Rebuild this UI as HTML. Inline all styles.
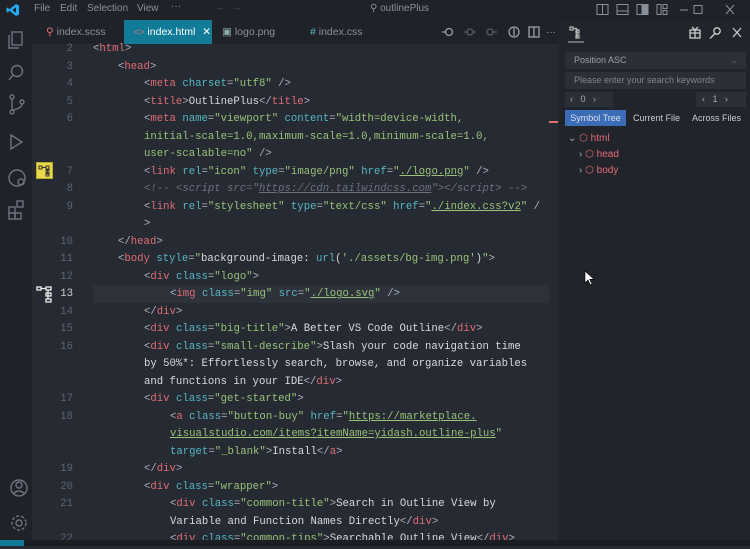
<!DOCTYPE html>
<html><head><meta charset="utf-8"><style>
*{margin:0;padding:0;box-sizing:border-box}
body{width:750px;height:546px;background:#262a32;overflow:hidden;position:relative;font-family:"Liberation Sans",sans-serif;color:#abb2bf}
.abs{position:absolute}
#title{left:0;top:0;width:750px;height:20px;background:#1f2228;font-size:10px;color:#8a909b}
#act{left:0;top:20px;width:32px;height:520px;background:#1f2228}
#tabs{left:32px;top:20px;width:526px;height:24px;background:#1f2228}
.tab{position:absolute;top:0;height:24px;line-height:24px;font-size:10.5px;color:#8a909b}
#side{left:558px;top:20px;width:192px;height:520px;background:#21252b}
#status{left:0;top:540px;width:750px;height:6px;background:#1b1e23}
.code{position:absolute;left:0;top:41px;width:558px;font-family:"Liberation Mono",monospace;font-size:10.65px;}
.ln{position:absolute;height:17.5px;line-height:17.5px;white-space:pre}
.n{right:485px;color:#5c6370;text-align:right;width:40px}
.p{color:#abb2bf}.t{color:#e06c75}.a{color:#56b6c2}.s{color:#98c379}.u{color:#98c379;text-decoration:underline}.x{color:#d7dae0}.c{color:#6b717d;font-style:italic}
.box{position:absolute;background:#2b2f37;font-size:9px;color:#8a909b}
</style></head><body>
<div id="title" class="abs">
 <svg class="abs" style="left:6px;top:3px" width="14" height="14" viewBox="0 0 14 14"><path d="M10 1 L13 2.5 V11.5 L10 13 L3.5 7.8 L1.5 9.5 L0.5 9 V5 L1.5 4.5 L3.5 6.2 Z M10 4.3 L6.2 7 L10 9.7 Z" fill="#23a9f2"/></svg>
 <span class="abs" style="left:34px;top:3px">File</span>
 <span class="abs" style="left:60px;top:3px">Edit</span>
 <span class="abs" style="left:87px;top:3px">Selection</span>
 <span class="abs" style="left:137px;top:3px">View</span>
 <span class="abs" style="left:171px;top:1px">···</span>
 <span class="abs" style="left:216px;top:2px;color:#4c515b">←&nbsp;&nbsp;→</span>
 <span class="abs" style="left:370px;top:3px">⚲ outlinePlus</span>
 <svg class="abs" style="left:576px;top:3px" width="170" height="14"><g stroke="#8a909b" fill="none"><rect x="21" y="1.5" width="11" height="10"/><line x1="26.5" y1="1.5" x2="26.5" y2="11.5"/><rect x="41" y="1.5" width="11" height="10"/><line x1="41" y1="8" x2="52" y2="8"/><rect x="61" y="1.5" width="11" height="10"/><rect x="66" y="1.5" width="6" height="10" fill="#8a909b"/><rect x="81" y="1.5" width="4" height="10"/><rect x="87" y="1.5" width="4" height="4"/><rect x="87" y="7.5" width="4" height="4"/><line x1="104" y1="7" x2="112" y2="7"/><rect x="118" y="2.5" width="8" height="8"/><path d="M150 2 L158 11 M158 2 L150 11"/></g></svg>
</div>
<div id="act" class="abs">
 <svg width="32" height="520" viewBox="0 0 32 520"><g stroke="#6d7380" fill="none" stroke-width="1.4">
 <rect x="12" y="12" width="10" height="13"/><path d="M9 15 V28 H19"/>
 <circle cx="17" cy="51" r="5.5"/><line x1="13" y1="55" x2="9" y2="60"/>
 <circle cx="12" cy="77" r="2"/><circle cx="12" cy="92" r="2"/><circle cx="22" cy="82" r="2"/><path d="M12 79 V90 M22 84 Q22 88 13 90"/>
 <path d="M11 115 L22 122 L11 129 Z"/>
 <circle cx="17" cy="158" r="8"/><circle cx="21" cy="162" r="3"/>
 <rect x="9" y="187" width="6" height="6"/><rect x="9" y="193" width="6" height="6"/><rect x="15" y="193" width="6" height="6"/><rect x="17" y="181" width="6" height="6"/>
 <circle cx="19" cy="468" r="8"/><circle cx="19" cy="465" r="3"/><path d="M13 474 Q19 468 25 474"/>
 <circle cx="19" cy="503" r="3"/><circle cx="19" cy="503" r="7" stroke-dasharray="3 2"/>
 </g></svg>
</div>
<div id="tabs" class="abs">
 <div class="tab" style="left:14px"><span style="color:#e06c75">⚲</span> index.scss</div>
 <div class="tab" style="left:92px;width:88px;background:#127c98;color:#fff;padding-left:10px"><span style="color:#e06c75;font-size:9px">&lt;&gt;</span> index.html <span style="margin-left:4px">✕</span></div>
 <div class="tab" style="left:190px"><span style="color:#8aa;">▣</span> logo.png</div>
 <div class="tab" style="left:278px"><span style="color:#56b6c2">#</span> index.css</div>
 <svg class="abs" style="left:410px;top:5px" width="116" height="14"><g stroke="#9aa0aa" fill="none" stroke-width="1.3"><circle cx="7" cy="7" r="3.5"/><path d="M0 7 H3"/><circle cx="28" cy="7" r="3" stroke="#555a64"/><path d="M22 7H25M31 7H34" stroke="#555a64"/><circle cx="48" cy="7" r="3" stroke="#555a64"/><path d="M51 7H55" stroke="#555a64"/><circle cx="72" cy="7" r="5"/><path d="M72 3V11"/><rect x="87" y="2" width="10" height="10"/><line x1="92" y1="2" x2="92" y2="12"/></g><text x="104" y="10" fill="#9aa0aa" font-size="10">···</text></svg>
</div>
<div id="side" class="abs">
 <svg class="abs" style="left:10px;top:5px" width="16" height="18"><g stroke="#bbb" fill="none" stroke-width="1.2"><rect x="2" y="2" width="3" height="3"/><rect x="8" y="5" width="3" height="3"/><rect x="8" y="10" width="3" height="3"/><path d="M5 3.5H9M9 4V13"/></g><line x1="0" y1="17" x2="16" y2="17" stroke="#bbb"/></svg>
 <svg class="abs" style="left:130px;top:6px" width="60" height="14"><g stroke="#ccc" fill="none" stroke-width="1.3"><rect x="2" y="4" width="10" height="8"/><path d="M2 7H12M7 4V12M4 1L7 4L10 1"/><circle cx="29" cy="5" r="3.2"/><path d="M27 7.5L22 12.5"/><path d="M45 2L53 11M53 2L45 11"/></g></svg>
 <div class="box" style="left:7px;top:32px;width:181px;height:17px;line-height:17px;padding-left:9px;color:#9aa0aa">Position ASC<span style="position:absolute;right:8px;color:#666">⌄</span></div>
 <div class="box" style="left:7px;top:52px;width:181px;height:17px;line-height:17px;padding-left:9px;color:#7f858f">Please enter your search keywords</div>
 <div class="box" style="left:7px;top:72px;width:48px;height:15px;line-height:15px;padding-left:5px;color:#aaa">‹&nbsp;&nbsp;&nbsp;0&nbsp;&nbsp;&nbsp;›</div>
 <div class="box" style="left:138px;top:72px;width:50px;height:15px;line-height:15px;padding-left:6px;color:#aaa">‹&nbsp;&nbsp;&nbsp;1&nbsp;&nbsp;&nbsp;›</div>
 <div class="abs" style="left:7px;top:90px;width:61px;height:16px;background:#3a6db5;color:#dde;font-size:9px;line-height:16px;text-align:center">Symbol Tree</div>
 <div class="abs" style="left:75px;top:90px;font-size:9px;line-height:16px;color:#c8ccd4">Current File</div>
 <div class="abs" style="left:134px;top:90px;font-size:9px;line-height:16px;color:#c8ccd4">Across Files</div>
 <div class="abs" style="left:10px;top:113px;font-size:10px;color:#e06c75"><span style="color:#aaa">⌄</span> ⬡ html</div>
 <div class="abs" style="left:21px;top:129px;font-size:10px;color:#e06c75"><span style="color:#aaa">›</span> ⬡ head</div>
 <div class="abs" style="left:21px;top:145px;font-size:10px;color:#e06c75"><span style="color:#aaa">›</span> ⬡ body</div>
 <svg class="abs" style="left:26px;top:250px" width="12" height="16"><path d="M1 1V13L4 10L6.5 15L8 14L5.7 9.3H10Z" fill="#fff" stroke="#000" stroke-width="0.6"/></svg>
</div>
<div class="abs" style="left:36px;top:162px;width:17px;height:17px;background:#e8d84a;border:1px solid #b9a92c"><svg width="15" height="15"><g stroke="#333" fill="none" stroke-width="1"><rect x="2" y="3" width="3" height="3"/><rect x="9" y="3" width="3" height="3"/><rect x="9" y="7" width="3" height="3"/><rect x="9" y="11" width="3" height="2"/><path d="M5 4.5H9M10.5 6V11"/></g></svg></div>
<svg class="abs" style="left:36px;top:285px" width="18" height="18"><g stroke="#eee" fill="none" stroke-width="1.3"><rect x="1" y="2" width="4" height="3"/><rect x="10" y="2" width="5" height="3"/><rect x="10" y="8" width="5" height="3"/><rect x="10" y="14" width="5" height="3"/><path d="M5 3.5H10M12 5V14"/></g></svg>
<div class="abs" style="left:93px;top:285px;width:456px;height:18px;background:#2d323b"></div>
<div class="abs" style="left:549px;top:121px;width:9px;height:2px;background:#e06c75"></div>
<div class="code">
<div class="ln n" style="top:0">2</div><div class="ln" style="left:93px;top:0"><span class="p">&lt;</span><span class="t">html</span><span class="p">&gt;</span></div>
<div class="ln n" style="top:17.5px">3</div><div class="ln" style="left:118px;top:17.5px"><span class="p">&lt;</span><span class="t">head</span><span class="p">&gt;</span></div>
<div class="ln n" style="top:35px">4</div><div class="ln" style="left:144px;top:35px"><span class="p">&lt;</span><span class="t">meta</span> <span class="a">charset</span><span class="p">=</span><span class="s">"utf8"</span> <span class="p">/&gt;</span></div>
<div class="ln n" style="top:52.5px">5</div><div class="ln" style="left:144px;top:52.5px"><span class="p">&lt;</span><span class="t">title</span><span class="p">&gt;</span><span class="x">OutlinePlus</span><span class="p">&lt;/</span><span class="t">title</span><span class="p">&gt;</span></div>
<div class="ln n" style="top:70px">6</div><div class="ln" style="left:144px;top:70px"><span class="p">&lt;</span><span class="t">meta</span> <span class="a">name</span><span class="p">=</span><span class="s">"viewport"</span> <span class="a">content</span><span class="p">=</span><span class="s">"width=device-width,</span></div>
<div class="ln" style="left:144px;top:87.5px"><span class="s">initial-scale=1.0,maximum-scale=1.0,minimum-scale=1.0,</span></div>
<div class="ln" style="left:144px;top:105px"><span class="s">user-scalable=no"</span> <span class="p">/&gt;</span></div>
<div class="ln n" style="top:122.5px">7</div><div class="ln" style="left:144px;top:122.5px"><span class="p">&lt;</span><span class="t">link</span> <span class="a">rel</span><span class="p">=</span><span class="s">"icon"</span> <span class="a">type</span><span class="p">=</span><span class="s">"image/png"</span> <span class="a">href</span><span class="p">=</span><span class="s">"<u>./logo.png</u>"</span> <span class="p">/&gt;</span></div>
<div class="ln n" style="top:140px">8</div><div class="ln c" style="left:144px;top:140px">&lt;!-- &lt;script src="<u>https://cdn.tailwindcss.com</u>"&gt;&lt;/script&gt; --&gt;</div>
<div class="ln n" style="top:157.5px">9</div><div class="ln" style="left:144px;top:157.5px"><span class="p">&lt;</span><span class="t">link</span> <span class="a">rel</span><span class="p">=</span><span class="s">"stylesheet"</span> <span class="a">type</span><span class="p">=</span><span class="s">"text/css"</span> <span class="a">href</span><span class="p">=</span><span class="s">"<u>./index.css?v2</u>"</span> <span class="p">/</span></div>
<div class="ln" style="left:144px;top:175px"><span class="p">&gt;</span></div>
<div class="ln n" style="top:192.5px">10</div><div class="ln" style="left:118px;top:192.5px"><span class="p">&lt;/</span><span class="t">head</span><span class="p">&gt;</span></div>
<div class="ln n" style="top:210px">11</div><div class="ln" style="left:118px;top:210px"><span class="p">&lt;</span><span class="t">body</span> <span class="a">style</span><span class="p">=</span><span class="s">"</span><span class="x">background-image: </span><span class="a">url</span><span class="x">(</span><span class="s">'./assets/bg-img.png'</span><span class="x">)</span><span class="s">"</span><span class="p">&gt;</span></div>
<div class="ln n" style="top:227.5px">12</div><div class="ln" style="left:144px;top:227.5px"><span class="p">&lt;</span><span class="t">div</span> <span class="a">class</span><span class="p">=</span><span class="s">"logo"</span><span class="p">&gt;</span></div>
<div class="ln n" style="top:245px;color:#c8ccd4">13</div><div class="ln" style="left:170px;top:245px"><span class="p">&lt;</span><span class="t">img</span> <span class="a">class</span><span class="p">=</span><span class="s">"img"</span> <span class="a">src</span><span class="p">=</span><span class="s">"<u>./logo.svg</u>"</span> <span class="p">/&gt;</span></div>
<div class="ln n" style="top:262.5px">14</div><div class="ln" style="left:144px;top:262.5px"><span class="p">&lt;/</span><span class="t">div</span><span class="p">&gt;</span></div>
<div class="ln n" style="top:280px">15</div><div class="ln" style="left:144px;top:280px"><span class="p">&lt;</span><span class="t">div</span> <span class="a">class</span><span class="p">=</span><span class="s">"big-title"</span><span class="p">&gt;</span><span class="x">A Better VS Code Outline</span><span class="p">&lt;/</span><span class="t">div</span><span class="p">&gt;</span></div>
<div class="ln n" style="top:297.5px">16</div><div class="ln" style="left:144px;top:297.5px"><span class="p">&lt;</span><span class="t">div</span> <span class="a">class</span><span class="p">=</span><span class="s">"small-describe"</span><span class="p">&gt;</span><span class="x">Slash your code navigation time</span></div>
<div class="ln x" style="left:144px;top:315px">by 50%*: Effortlessly search, browse, and organize variables</div>
<div class="ln" style="left:144px;top:332.5px"><span class="x">and functions in your IDE</span><span class="p">&lt;/</span><span class="t">div</span><span class="p">&gt;</span></div>
<div class="ln n" style="top:350px">17</div><div class="ln" style="left:144px;top:350px"><span class="p">&lt;</span><span class="t">div</span> <span class="a">class</span><span class="p">=</span><span class="s">"get-started"</span><span class="p">&gt;</span></div>
<div class="ln n" style="top:367.5px">18</div><div class="ln" style="left:170px;top:367.5px"><span class="p">&lt;</span><span class="t">a</span> <span class="a">class</span><span class="p">=</span><span class="s">"button-buy"</span> <span class="a">href</span><span class="p">=</span><span class="s">"<u>https://marketplace.</u></span></div>
<div class="ln" style="left:170px;top:385px"><span class="u">visualstudio.com/items?itemName=yidash.outline-plus</span><span class="s">"</span></div>
<div class="ln" style="left:170px;top:402.5px"><span class="a">target</span><span class="p">=</span><span class="s">"_blank"</span><span class="p">&gt;</span><span class="x">Install</span><span class="p">&lt;/</span><span class="t">a</span><span class="p">&gt;</span></div>
<div class="ln n" style="top:420px">19</div><div class="ln" style="left:144px;top:420px"><span class="p">&lt;/</span><span class="t">div</span><span class="p">&gt;</span></div>
<div class="ln n" style="top:437.5px">20</div><div class="ln" style="left:144px;top:437.5px"><span class="p">&lt;</span><span class="t">div</span> <span class="a">class</span><span class="p">=</span><span class="s">"wrapper"</span><span class="p">&gt;</span></div>
<div class="ln n" style="top:455px">21</div><div class="ln" style="left:170px;top:455px"><span class="p">&lt;</span><span class="t">div</span> <span class="a">class</span><span class="p">=</span><span class="s">"common-title"</span><span class="p">&gt;</span><span class="x">Search in Outline View by</span></div>
<div class="ln" style="left:170px;top:472.5px"><span class="x">Variable and Function Names Directly</span><span class="p">&lt;/</span><span class="t">div</span><span class="p">&gt;</span></div>
<div class="ln n" style="top:490px">22</div><div class="ln" style="left:170px;top:490px"><span class="p">&lt;</span><span class="t">div</span> <span class="a">class</span><span class="p">=</span><span class="s">"common-tips"</span><span class="p">&gt;</span><span class="x">Searchable Outline View</span><span class="p">&lt;/</span><span class="t">div</span><span class="p">&gt;</span></div>
</div>
<div id="status" class="abs"><div class="abs" style="left:0;top:0;width:24px;height:6px;background:#127c98"></div></div>
</body></html>
